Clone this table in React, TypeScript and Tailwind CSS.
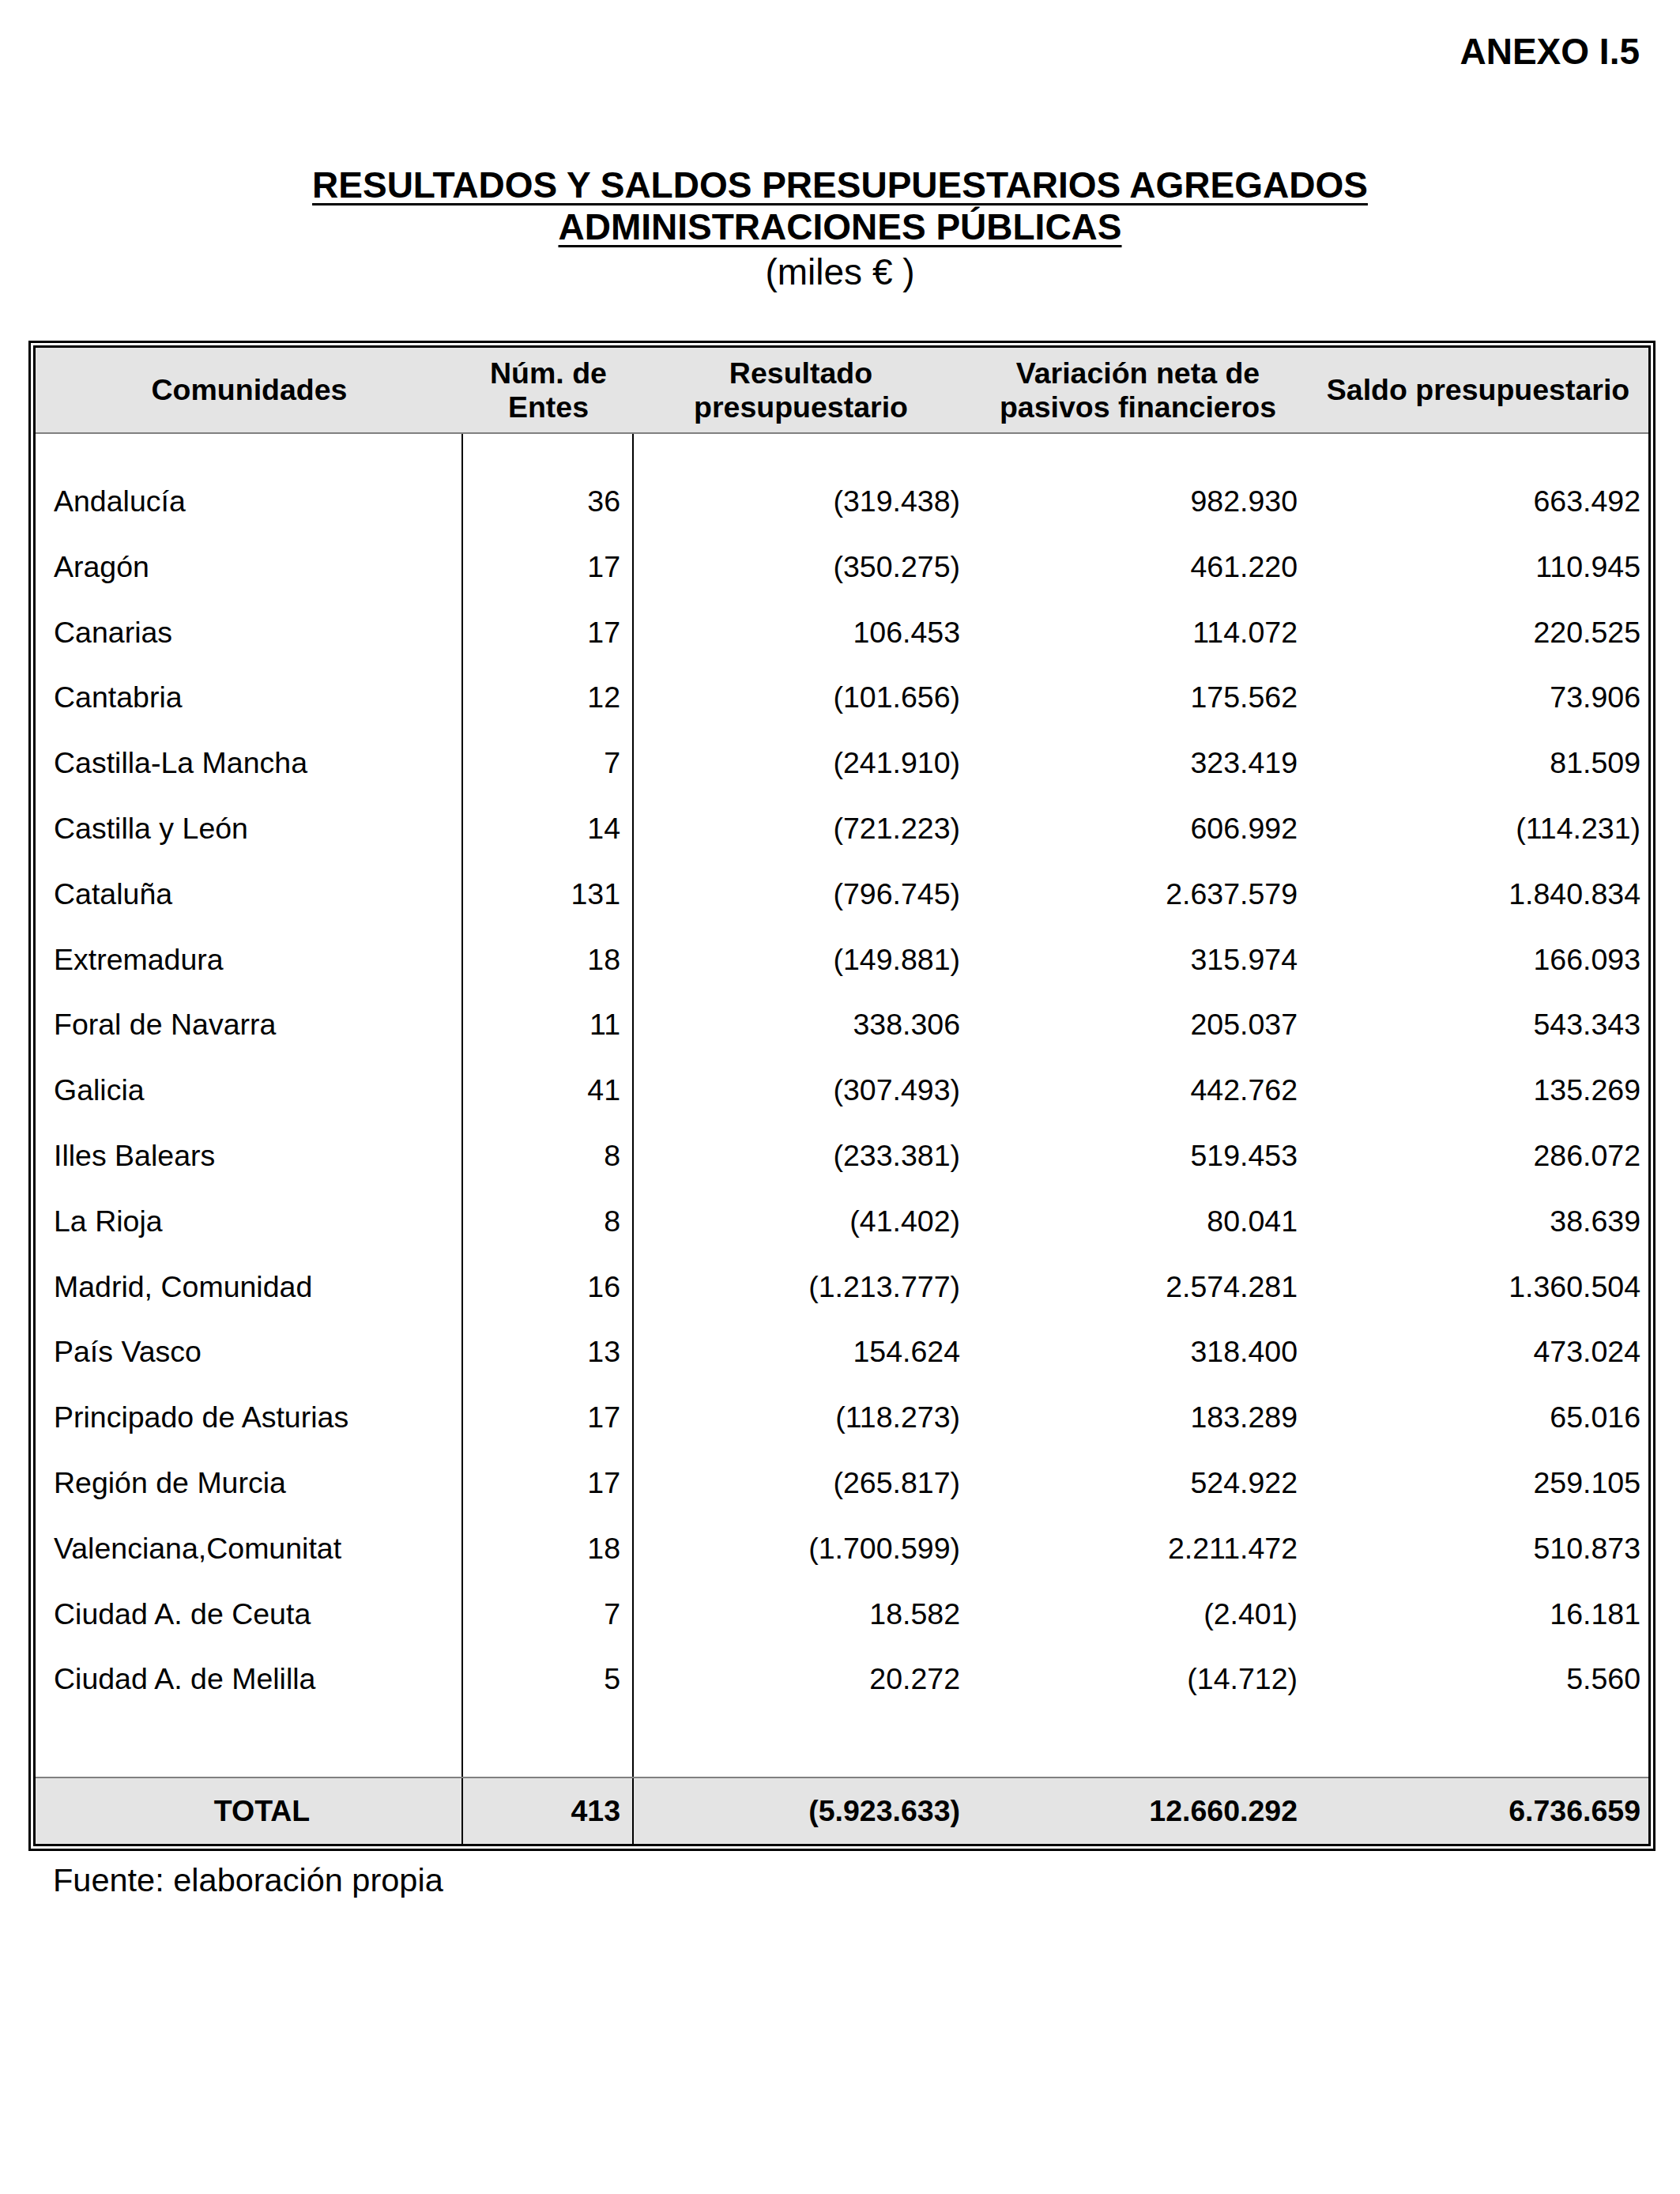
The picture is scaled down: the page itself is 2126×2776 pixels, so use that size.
import React from 'react';

type Row = {
  name: string;
  entes: string;
  resultado: string;
  variacion: string;
  saldo: string;
};

const rows: Row[] = [
  { name: 'Andalucía', entes: '36', resultado: '(319.438)', variacion: '982.930', saldo: '663.492' },
  { name: 'Aragón', entes: '17', resultado: '(350.275)', variacion: '461.220', saldo: '110.945' },
  { name: 'Canarias', entes: '17', resultado: '106.453', variacion: '114.072', saldo: '220.525' },
  { name: 'Cantabria', entes: '12', resultado: '(101.656)', variacion: '175.562', saldo: '73.906' },
  { name: 'Castilla-La Mancha', entes: '7', resultado: '(241.910)', variacion: '323.419', saldo: '81.509' },
  { name: 'Castilla y León', entes: '14', resultado: '(721.223)', variacion: '606.992', saldo: '(114.231)' },
  { name: 'Cataluña', entes: '131', resultado: '(796.745)', variacion: '2.637.579', saldo: '1.840.834' },
  { name: 'Extremadura', entes: '18', resultado: '(149.881)', variacion: '315.974', saldo: '166.093' },
  { name: 'Foral de Navarra', entes: '11', resultado: '338.306', variacion: '205.037', saldo: '543.343' },
  { name: 'Galicia', entes: '41', resultado: '(307.493)', variacion: '442.762', saldo: '135.269' },
  { name: 'Illes Balears', entes: '8', resultado: '(233.381)', variacion: '519.453', saldo: '286.072' },
  { name: 'La Rioja', entes: '8', resultado: '(41.402)', variacion: '80.041', saldo: '38.639' },
  { name: 'Madrid, Comunidad', entes: '16', resultado: '(1.213.777)', variacion: '2.574.281', saldo: '1.360.504' },
  { name: 'País Vasco', entes: '13', resultado: '154.624', variacion: '318.400', saldo: '473.024' },
  { name: 'Principado de Asturias', entes: '17', resultado: '(118.273)', variacion: '183.289', saldo: '65.016' },
  { name: 'Región de Murcia', entes: '17', resultado: '(265.817)', variacion: '524.922', saldo: '259.105' },
  { name: 'Valenciana,Comunitat', entes: '18', resultado: '(1.700.599)', variacion: '2.211.472', saldo: '510.873' },
  { name: 'Ciudad A. de Ceuta', entes: '7', resultado: '18.582', variacion: '(2.401)', saldo: '16.181' },
  { name: 'Ciudad A. de Melilla', entes: '5', resultado: '20.272', variacion: '(14.712)', saldo: '5.560' },
];

// same column widths for header, body and total
const cols = 'grid grid-cols-[541px_216px_423px_430px_431px]';

const BodyRow = ({ row, height }: { row?: Row; height: string }) => (
  <div className={`${cols} ${height} leading-[82.8px]`}>
    <div className="border-r-2 border-black pl-[23px]">{row?.name}</div>
    <div className="border-r-2 border-black pr-[15px] text-right">{row?.entes}</div>
    <div className="pr-[10px] text-right">{row?.resultado}</div>
    <div className="pr-[13px] text-right">{row?.variacion}</div>
    <div className="pr-[10px] text-right">{row?.saldo}</div>
  </div>
);

const App = () => {
  return (
    <div className="min-h-screen w-[2126px] bg-white text-black font-['Liberation_Sans',Arial,sans-serif]">
      {/* Anexo */}
      <div className="pt-[42px] pr-[51px] text-right text-[46px] leading-[46px] font-bold">ANEXO I.5</div>

      {/* Titulo */}
      <div className="mt-[120px] text-center text-[46px] leading-[53px]">
        <div className="font-bold underline decoration-[3px] underline-offset-[7px]">
          RESULTADOS Y SALDOS PRESUPUESTARIOS AGREGADOS
        </div>
        <div className="font-bold underline decoration-[3px] underline-offset-[7px]">ADMINISTRACIONES PÚBLICAS</div>
        <div className="mt-[4px]">(miles € )</div>
      </div>

      {/* Tabla */}
      <div className="ml-[36px] mt-[60px] w-[2059px] border-[3px] border-black p-[3px]">
        <div className="border-[3px] border-black text-[37.5px]">
          <div className={`${cols} h-[109px] bg-[#e4e4e4] border-b-2 border-[#808080] font-bold leading-[43px] text-center`}>
            <div className="flex items-center justify-center">Comunidades</div>
            <div className="flex items-center justify-center">
              Núm. de
              <br />
              Entes
            </div>
            <div className="flex items-center justify-center">
              Resultado
              <br />
              presupuestario
            </div>
            <div className="flex items-center justify-center">
              Variación neta de
              <br />
              pasivos financieros
            </div>
            <div className="flex items-center justify-center">Saldo presupuestario</div>
          </div>

          <BodyRow height="h-[44px]" />
          {rows.map(row => (
            <BodyRow key={row.name} row={row} height="h-[82.8px]" />
          ))}
          <BodyRow height="h-[81.8px]" />

          <div className={`${cols} h-[85px] bg-[#e4e4e4] border-t-2 border-[#808080] font-bold leading-[83px]`}>
            <div className="border-r-2 border-black pl-[34px] text-center">TOTAL</div>
            <div className="border-r-2 border-black pr-[15px] text-right">413</div>
            <div className="pr-[10px] text-right">(5.923.633)</div>
            <div className="pr-[13px] text-right">12.660.292</div>
            <div className="pr-[10px] text-right">6.736.659</div>
          </div>
        </div>
      </div>

      <div className="mt-[16px] pl-[67px] text-[41.5px] leading-[41px]">Fuente: elaboración propia</div>
    </div>
  );
};

export default App;
